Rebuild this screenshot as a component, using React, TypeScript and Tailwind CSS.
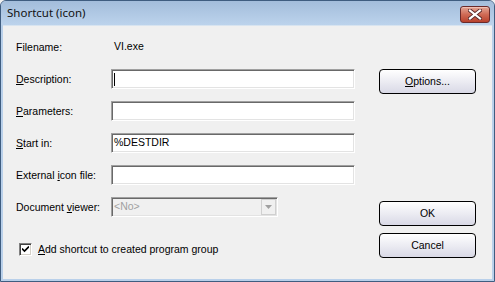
import React from "react";

const font = { fontFamily: '"Liberation Sans", Arial, sans-serif' };

function U({ c }: { c: string }) {
  return <span className="underline underline-offset-[1px] decoration-1">{c}</span>;
}

function Label({ children }: { children: React.ReactNode }) {
  return <div className="w-[95px] shrink-0 text-[10.5px] leading-[13px] text-black">{children}</div>;
}

function Sunken({ className = "", children }: { className?: string; children?: React.ReactNode }) {
  return (
    <div
      className={`h-[20px] border border-t-[#a0a0a0] border-l-[#a0a0a0] border-b-white border-r-white shadow-[inset_1px_1px_0_#696969,inset_-1px_-1px_0_#e3e3e3] flex items-center ${className}`}
    >
      {children}
    </div>
  );
}

function Btn({ children }: { children: React.ReactNode }) {
  return (
    <div className="w-[97px] h-[25px] rounded-[4px] border border-black bg-gradient-to-b from-white to-[#d9d9e6] flex items-center justify-center text-[10.5px] text-black">
      {children}
    </div>
  );
}

export default function App() {
  return (
    <div className="w-[495px] h-[282px] bg-[#f0f0f0]" style={font}>
      <div className="w-[495px] h-[282px] flex flex-col rounded-t-[6px] border border-[#3f5d80] bg-[#b9d0ea] overflow-hidden">
        <div className="h-[24px] shrink-0 flex items-center justify-between pl-[6px] pr-[4px] bg-gradient-to-b from-[#a3bddb] to-[#bcd3ec]">
          <span
            className="text-[11.5px] text-[#111] leading-none"
            style={{ fontFamily: '"Noto Sans", "Open Sans", sans-serif' }}
          >
            Shortcut (icon)
          </span>
          <div className="w-[30px] h-[17px] mt-[2px] rounded-[3px] border border-[#6a2a2a] bg-gradient-to-b from-[#e2a595] via-[#cf6a55] to-[#b8412c] flex items-center justify-center shadow-[inset_0_1px_0_#f0c0b4]">
            <svg width="14" height="11" viewBox="0 0 14 11">
              <path d="M2 1.5 L12 9.5 M12 1.5 L2 9.5" stroke="#5a2a2a" strokeWidth="4" strokeLinecap="square" />
              <path d="M2 1.5 L12 9.5 M12 1.5 L2 9.5" stroke="#ffffff" strokeWidth="2.2" strokeLinecap="square" />
            </svg>
          </div>
        </div>
        <div className="flex-1 mx-[2px] mb-[2px] bg-[#f0f0f0] flex border-t border-[#d8e4f0]">
          <div className="flex flex-col pl-[13px] pt-[11px] w-[362px]">
            <div className="h-[20px] flex items-center">
              <Label>Filename:</Label>
              <span className="text-[10.5px] pl-[3px]">VI.exe</span>
            </div>
            <div className="h-[20px] flex items-center mt-[12px]">
              <Label>
                <U c="D" />escription:
              </Label>
              <Sunken className="w-[244px] bg-white">
                <div className="ml-[2px] w-[1px] h-[13px] bg-black" />
              </Sunken>
            </div>
            <div className="h-[20px] flex items-center mt-[12px]">
              <Label>
                <U c="P" />arameters:
              </Label>
              <Sunken className="w-[244px] bg-white" />
            </div>
            <div className="h-[20px] flex items-center mt-[12px]">
              <Label>
                <U c="S" />tart in:
              </Label>
              <Sunken className="w-[244px] bg-white">
                <span className="text-[10.5px] pl-[2px] text-black">%DESTDIR</span>
              </Sunken>
            </div>
            <div className="h-[20px] flex items-center mt-[12px]">
              <Label>
                External <U c="i" />con file:
              </Label>
              <Sunken className="w-[244px] bg-white" />
            </div>
            <div className="h-[20px] flex items-center mt-[12px]">
              <Label>
                Document <U c="v" />iewer:
              </Label>
              <Sunken className="w-[167px] bg-[#f0f0f0] justify-between">
                <span className="text-[10.5px] pl-[2px] text-[#a0a0a0]">&lt;No&gt;</span>
                <div className="w-[15px] h-[16px] mr-[1px] bg-[#f0f0f0] border border-[#d0d0d0] flex items-center justify-center">
                  <svg width="7" height="4" viewBox="0 0 7 4">
                    <path d="M0 0 H7 L3.5 4 Z" fill="#a0a0a0" />
                  </svg>
                </div>
              </Sunken>
            </div>
            <div className="flex items-center mt-[25px] ml-[3px] gap-[6px]">
              <div className="w-[13px] h-[13px] bg-white border border-t-[#808080] border-l-[#808080] border-b-white border-r-white shadow-[inset_1px_1px_0_#404040,inset_-1px_-1px_0_#d4d0c8] flex items-center justify-center">
                <svg width="7" height="7" viewBox="0 0 7 7">
                  <path d="M0 2.5 L2.5 5 L7 0.5" stroke="#000" strokeWidth="1.6" fill="none" />
                </svg>
              </div>
              <span className="text-[10.5px] text-black">
                <U c="A" />dd shortcut to created program group
              </span>
            </div>
          </div>
          <div className="flex flex-col pl-[14px] pt-[43px]">
            <Btn>
              <span>
                <U c="O" />ptions...
              </span>
            </Btn>
            <div className="mt-[107px]">
              <Btn>OK</Btn>
            </div>
            <div className="mt-[7px]">
              <Btn>Cancel</Btn>
            </div>
          </div>
        </div>
      </div>
    </div>
  );
}
